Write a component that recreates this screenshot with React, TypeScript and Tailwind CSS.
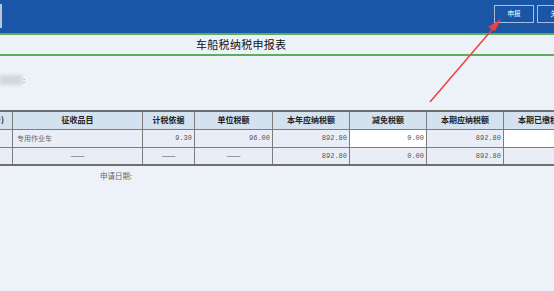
export default function App() {
  const cjk = "font-['Noto_Sans_CJK_SC',sans-serif]";
  const mono = "font-['Liberation_Mono','Noto_Sans_CJK_SC',monospace]";
  const th = "border border-[#7d7d7d] bg-[#d4e1ef] text-center text-[8px] font-bold text-[#222] h-[18px] p-0 whitespace-nowrap overflow-hidden";
  const td = "border border-[#7d7d7d] bg-[#e9eef6] h-[18px] p-0 text-[7px] text-[#555] whitespace-nowrap";

  return (
    <div className={`relative w-[554px] h-[291px] overflow-hidden bg-[#edf1f8] ${cjk}`}>
      {/* top bar */}
      <div className="flex h-[33px] items-start justify-between bg-[#1b56a6]">
        <div className="mt-[4px] h-[24px] w-[2px] bg-[#b9c5d9]" />
        <div className="mt-[5px] mr-[-23px] flex gap-[3px]">
          <button className="flex h-[18px] w-[40px] items-center justify-center border border-[#a9bedf] text-[6.5px] text-white">
            申报
          </button>
          <button className="flex h-[18px] w-[40px] items-center justify-center border border-[#a9bedf] text-[6.5px] text-white">
            关闭
          </button>
        </div>
      </div>
      <div className="h-[2px] bg-[#5cae5c]" />
      <div className="flex h-[19px] items-center bg-[#edf1f8] pl-[196px]">
        <span className="text-[11px] leading-none tracking-[0.3px] text-[#111]">车船税纳税申报表</span>
      </div>
      <div className="h-[2px] bg-[#5cae5c]" />

      {/* taxpayer line (blurred) */}
      <div className="mt-[18px] flex h-[12px] items-center">
        <span className="h-[10px] w-[22px] bg-[#d3d7de] blur-[1.5px]" />
        <span className="ml-[1px] text-[7px] text-[#666]">:</span>
      </div>

      {/* table */}
      <div className="mt-[24px] ml-[-48px] w-[640px]">
        <table className="w-[628px] table-fixed border-collapse border-y-2 border-[#6e6e6e]">
          <colgroup>
            <col className="w-[60px]" />
            <col className="w-[130px]" />
            <col className="w-[52px]" />
            <col className="w-[78px]" />
            <col className="w-[77px]" />
            <col className="w-[77px]" />
            <col className="w-[77px]" />
            <col className="w-[77px]" />
          </colgroup>
          <thead>
            <tr>
              <th className={`${th} pr-[8px] text-right`}>(车架号)</th>
              <th className={th}>征收品目</th>
              <th className={th}>计税依据</th>
              <th className={th}>单位税额</th>
              <th className={th}>本年应纳税额</th>
              <th className={th}>减免税额</th>
              <th className={th}>本期应纳税额</th>
              <th className={th}>本期已缴税额</th>
            </tr>
          </thead>
          <tbody>
            <tr>
              <td className={td} />
              <td className={`${td} pl-[4px] text-[7.5px] text-[#666]`}>专用作业车</td>
              <td className={`${td} ${mono} pr-[2px] text-right`}>9.30</td>
              <td className={`${td} ${mono} pr-[2px] text-right`}>96.00</td>
              <td className={`${td} ${mono} pr-[2px] text-right`}>892.80</td>
              <td className={`${td} ${mono} bg-white pr-[2px] text-right`}>0.00</td>
              <td className={`${td} ${mono} pr-[2px] text-right`}>892.80</td>
              <td className={`${td} bg-white`} />
            </tr>
            <tr>
              <td className={td} />
              <td className={`${td} text-center text-[8.5px]`}>——</td>
              <td className={`${td} text-center text-[8.5px]`}>——</td>
              <td className={`${td} text-center text-[8.5px]`}>——</td>
              <td className={`${td} ${mono} pr-[2px] text-right`}>892.80</td>
              <td className={`${td} ${mono} pr-[2px] text-right`}>0.00</td>
              <td className={`${td} ${mono} pr-[2px] text-right`}>892.80</td>
              <td className={td} />
            </tr>
          </tbody>
        </table>
      </div>

      <div className="mt-[4px] pl-[100px] text-[7.5px] text-[#666]">申请日期:</div>

      {/* red annotation arrow */}
      <svg className="pointer-events-none absolute left-0 top-0" width="554" height="291">
        <line x1="430" y1="102" x2="496" y2="25" stroke="#f04040" strokeWidth="1.5" />
        <polygon points="501,19 488,27 495,31" fill="#f04040" />
      </svg>
    </div>
  );
}
